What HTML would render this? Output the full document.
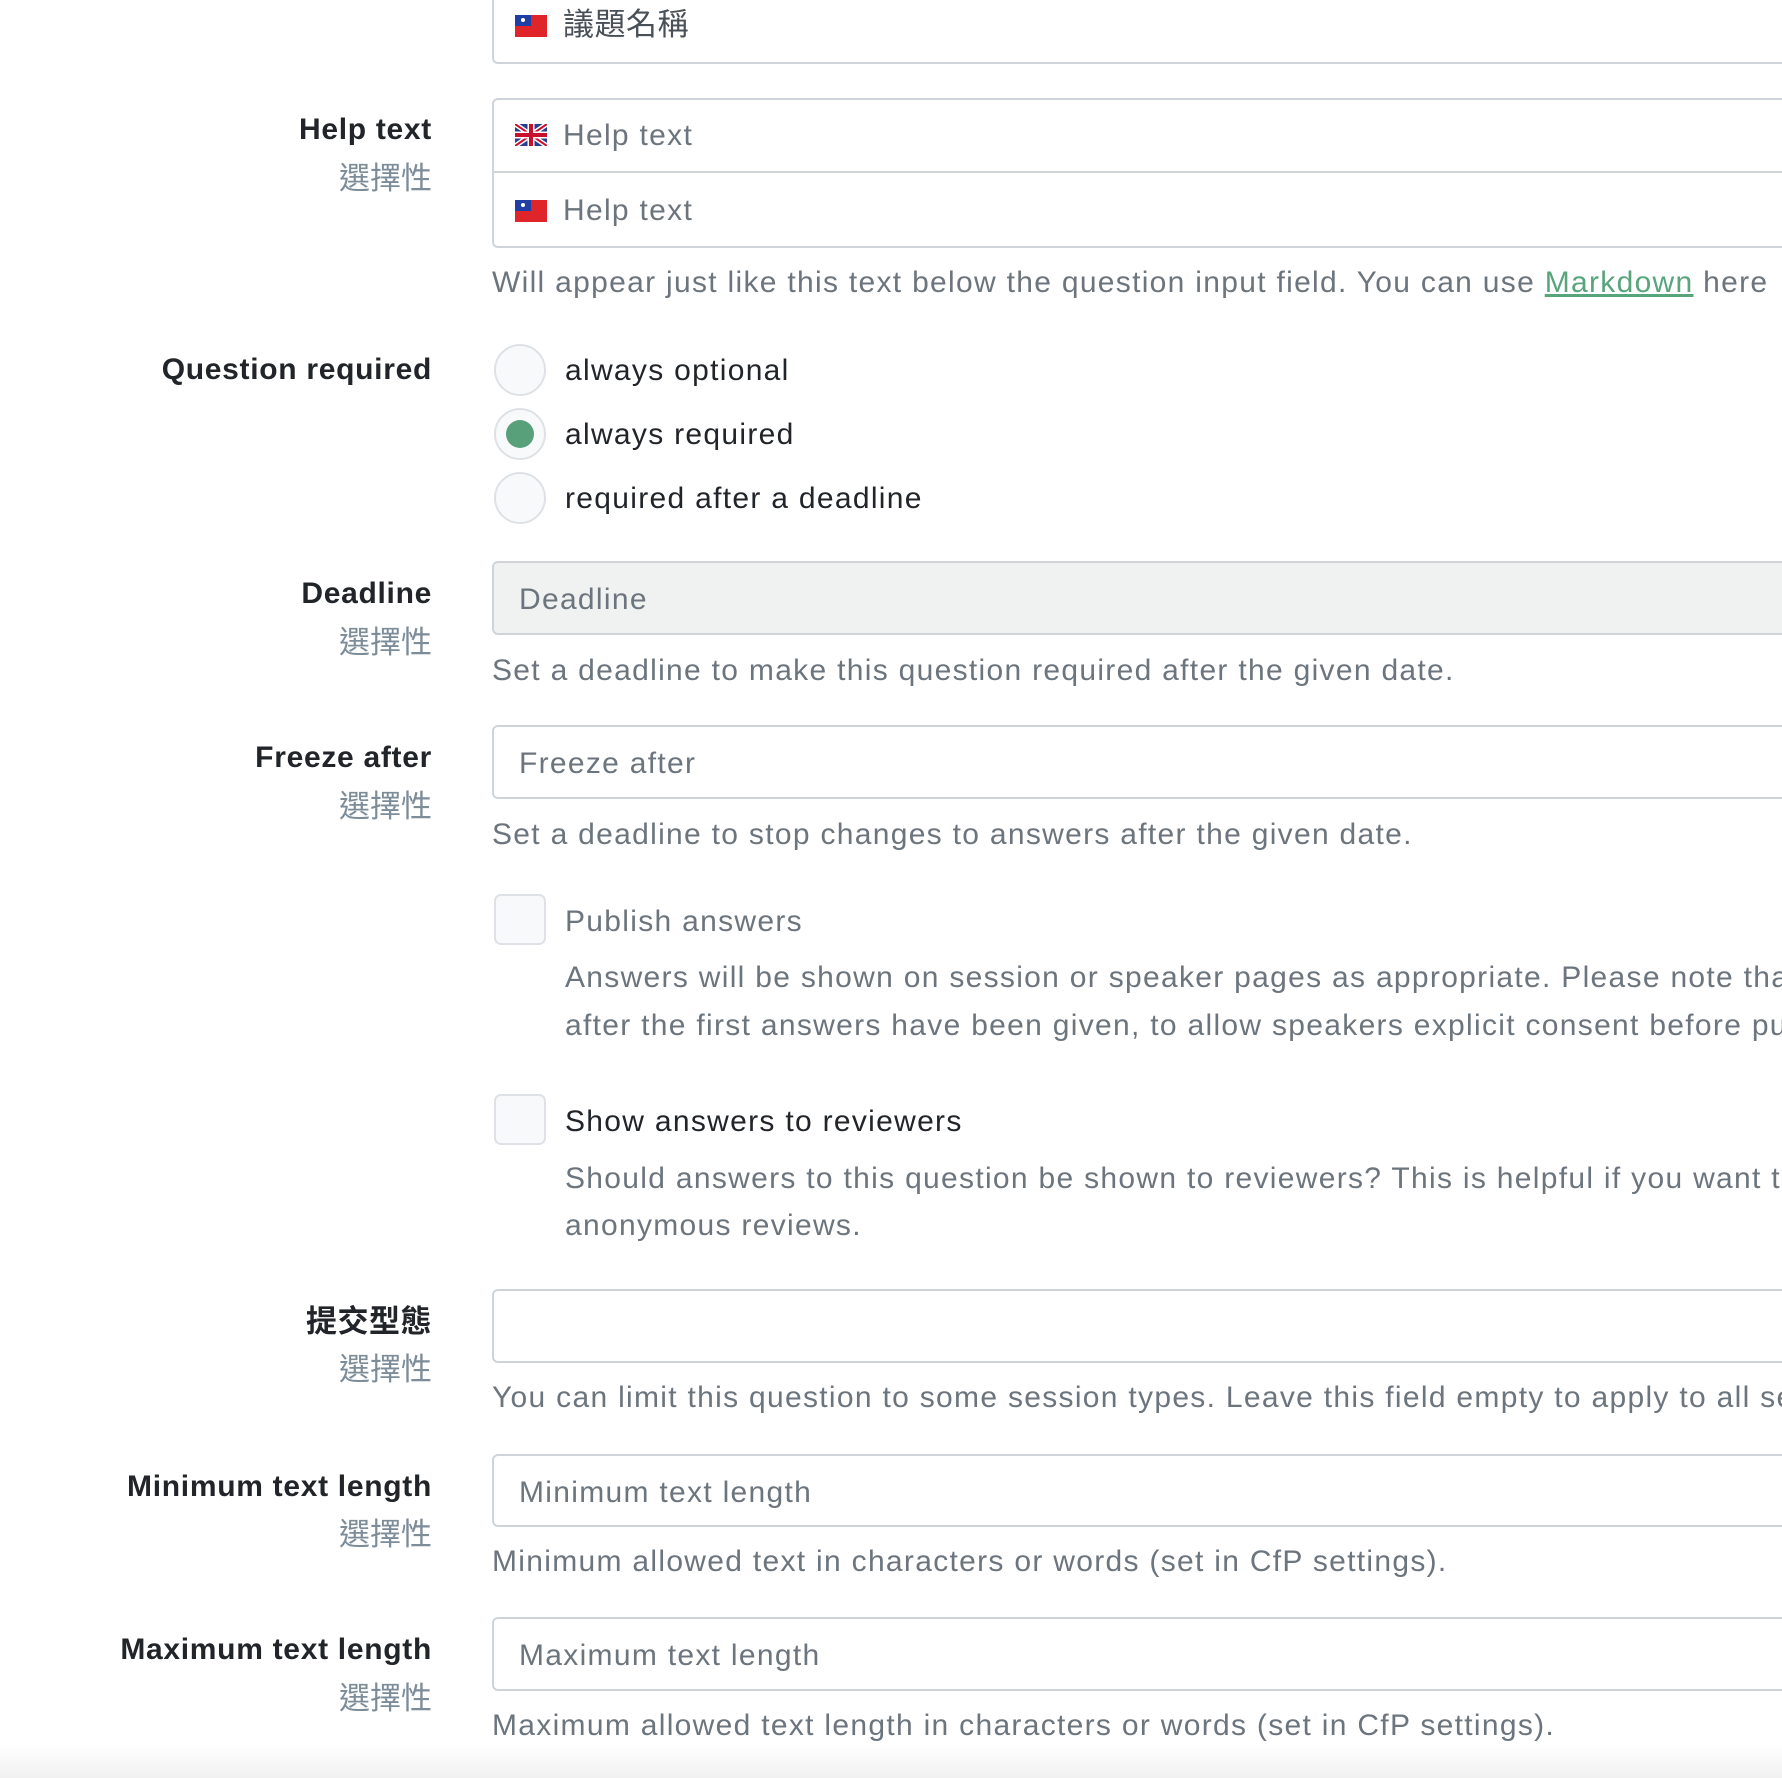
<!DOCTYPE html>
<html><head><meta charset="utf-8"><style>
*{box-sizing:border-box;margin:0;padding:0}
html,body{width:1782px;height:1778px;overflow:hidden}
body{background:#fff;font-family:"Liberation Sans","Noto Sans CJK TC",sans-serif;font-size:30px;white-space:nowrap}
#w{position:relative;width:1782px;height:1778px;overflow:hidden}
.a{position:absolute;line-height:1;letter-spacing:1.3px}
.lab{right:1350px;font-weight:bold;color:#212529;text-align:right;letter-spacing:0.7px}
.opt{right:1350px;color:#7d8c99;text-align:right;font-size:31px;letter-spacing:0}
.inp{position:absolute;left:492px;width:1300px;border:2px solid #ced4da;border-radius:6px;background:#fff}
.ph{color:#6c757d}
.help{left:492px;color:#6c757d}
.radio{position:absolute;left:494px;width:52px;height:52px;border-radius:50%;border:2px solid #dee2e6;background:#f8f9fa}
.cb{position:absolute;left:494px;width:52px;height:51px;border-radius:7px;border:2px solid #dee2e6;background:#f8f9fa}
.flag{position:absolute;left:515px;width:32px;height:22px}
.tw{background:#e0252a}
.tw::before{content:"";position:absolute;left:0;top:0;width:16px;height:11px;background:#1f3fa6}
.tw::after{content:"";position:absolute;left:6px;top:3px;width:4px;height:4px;border-radius:50%;background:#fff}
</style></head><body><div id="w">
<div class="inp" style="top:-12px;height:76px"></div>
<div class="flag tw" style="top:15px"></div>
<div class="a" style="left:563px;top:9px;color:#495057;font-size:31px;letter-spacing:0.5px">議題名稱</div>

<div class="a lab" style="top:115px">Help text</div>
<div class="a opt" style="top:163px">選擇性</div>
<div class="inp" style="top:98px;height:150px"></div>
<div style="position:absolute;left:494px;top:171px;width:1288px;height:2px;background:#ced4da"></div>
<svg class="flag" style="top:124px" viewBox="0 0 32 22"><rect width="32" height="22" fill="#2a3d8f"/><path d="M0 0L32 22M32 0L0 22" stroke="#fff" stroke-width="5"/><path d="M0 0L32 22M32 0L0 22" stroke="#c8102e" stroke-width="2"/><path d="M16 0V22M0 11H32" stroke="#fff" stroke-width="7"/><path d="M16 0V22M0 11H32" stroke="#c8102e" stroke-width="4"/></svg>
<div class="a ph" style="left:563px;top:121px">Help text</div>
<div class="flag tw" style="top:200px"></div>
<div class="a ph" style="left:563px;top:196px">Help text</div>
<div class="a help" style="top:268px">Will appear just like this text below the question input field. You can use <span style="color:#58a57c;text-decoration:underline">Markdown</span> here</div>

<div class="a lab" style="top:355px">Question required</div>
<div class="radio" style="top:344px"></div>
<div class="a" style="left:565px;top:356px;color:#212529">always optional</div>
<div class="radio" style="top:408px"><div style="position:absolute;left:10px;top:10px;width:28px;height:28px;border-radius:50%;background:#58a07a"></div></div>
<div class="a" style="left:565px;top:420px;color:#212529">always required</div>
<div class="radio" style="top:472px"></div>
<div class="a" style="left:565px;top:484px;color:#212529">required after a deadline</div>

<div class="a lab" style="top:579px">Deadline</div>
<div class="a opt" style="top:627px">選擇性</div>
<div class="inp" style="top:561px;height:74px;background:#eff2f1"></div>
<div class="a ph" style="left:519px;top:585px">Deadline</div>
<div class="a help" style="top:656px">Set a deadline to make this question required after the given date.</div>

<div class="a lab" style="top:743px">Freeze after</div>
<div class="a opt" style="top:791px">選擇性</div>
<div class="inp" style="top:725px;height:74px"></div>
<div class="a ph" style="left:519px;top:749px">Freeze after</div>
<div class="a help" style="top:820px">Set a deadline to stop changes to answers after the given date.</div>

<div class="cb" style="top:894px"></div>
<div class="a" style="left:565px;top:907px;color:#6c757d">Publish answers</div>
<div class="a help" style="left:565px;top:963px">Answers will be shown on session or speaker pages as appropriate. Please note that this cannot be changed</div>
<div class="a help" style="left:565px;top:1011px">after the first answers have been given, to allow speakers explicit consent before publishing</div>

<div class="cb" style="top:1094px"></div>
<div class="a" style="left:565px;top:1107px;color:#212529">Show answers to reviewers</div>
<div class="a help" style="left:565px;top:1164px">Should answers to this question be shown to reviewers? This is helpful if you want to collect</div>
<div class="a help" style="left:565px;top:1211px">anonymous reviews.</div>

<div class="a lab" style="top:1306px;font-size:31px;letter-spacing:0.5px">提交型態</div>
<div class="a opt" style="top:1354px">選擇性</div>
<div class="inp" style="top:1289px;height:74px"></div>
<div class="a help" style="top:1383px">You can limit this question to some session types. Leave this field empty to apply to all session types.</div>

<div class="a lab" style="top:1472px">Minimum text length</div>
<div class="a opt" style="top:1519px">選擇性</div>
<div class="inp" style="top:1454px;height:73px"></div>
<div class="a ph" style="left:519px;top:1478px">Minimum text length</div>
<div class="a help" style="top:1547px">Minimum allowed text in characters or words (set in CfP settings).</div>

<div class="a lab" style="top:1635px">Maximum text length</div>
<div class="a opt" style="top:1683px">選擇性</div>
<div class="inp" style="top:1617px;height:74px"></div>
<div class="a ph" style="left:519px;top:1641px">Maximum text length</div>
<div class="a help" style="top:1711px">Maximum allowed text length in characters or words (set in CfP settings).</div>

<div style="position:absolute;left:0;top:1745px;width:1782px;height:33px;background:linear-gradient(#fff,#f1f1f1)"></div>
</div></body></html>
